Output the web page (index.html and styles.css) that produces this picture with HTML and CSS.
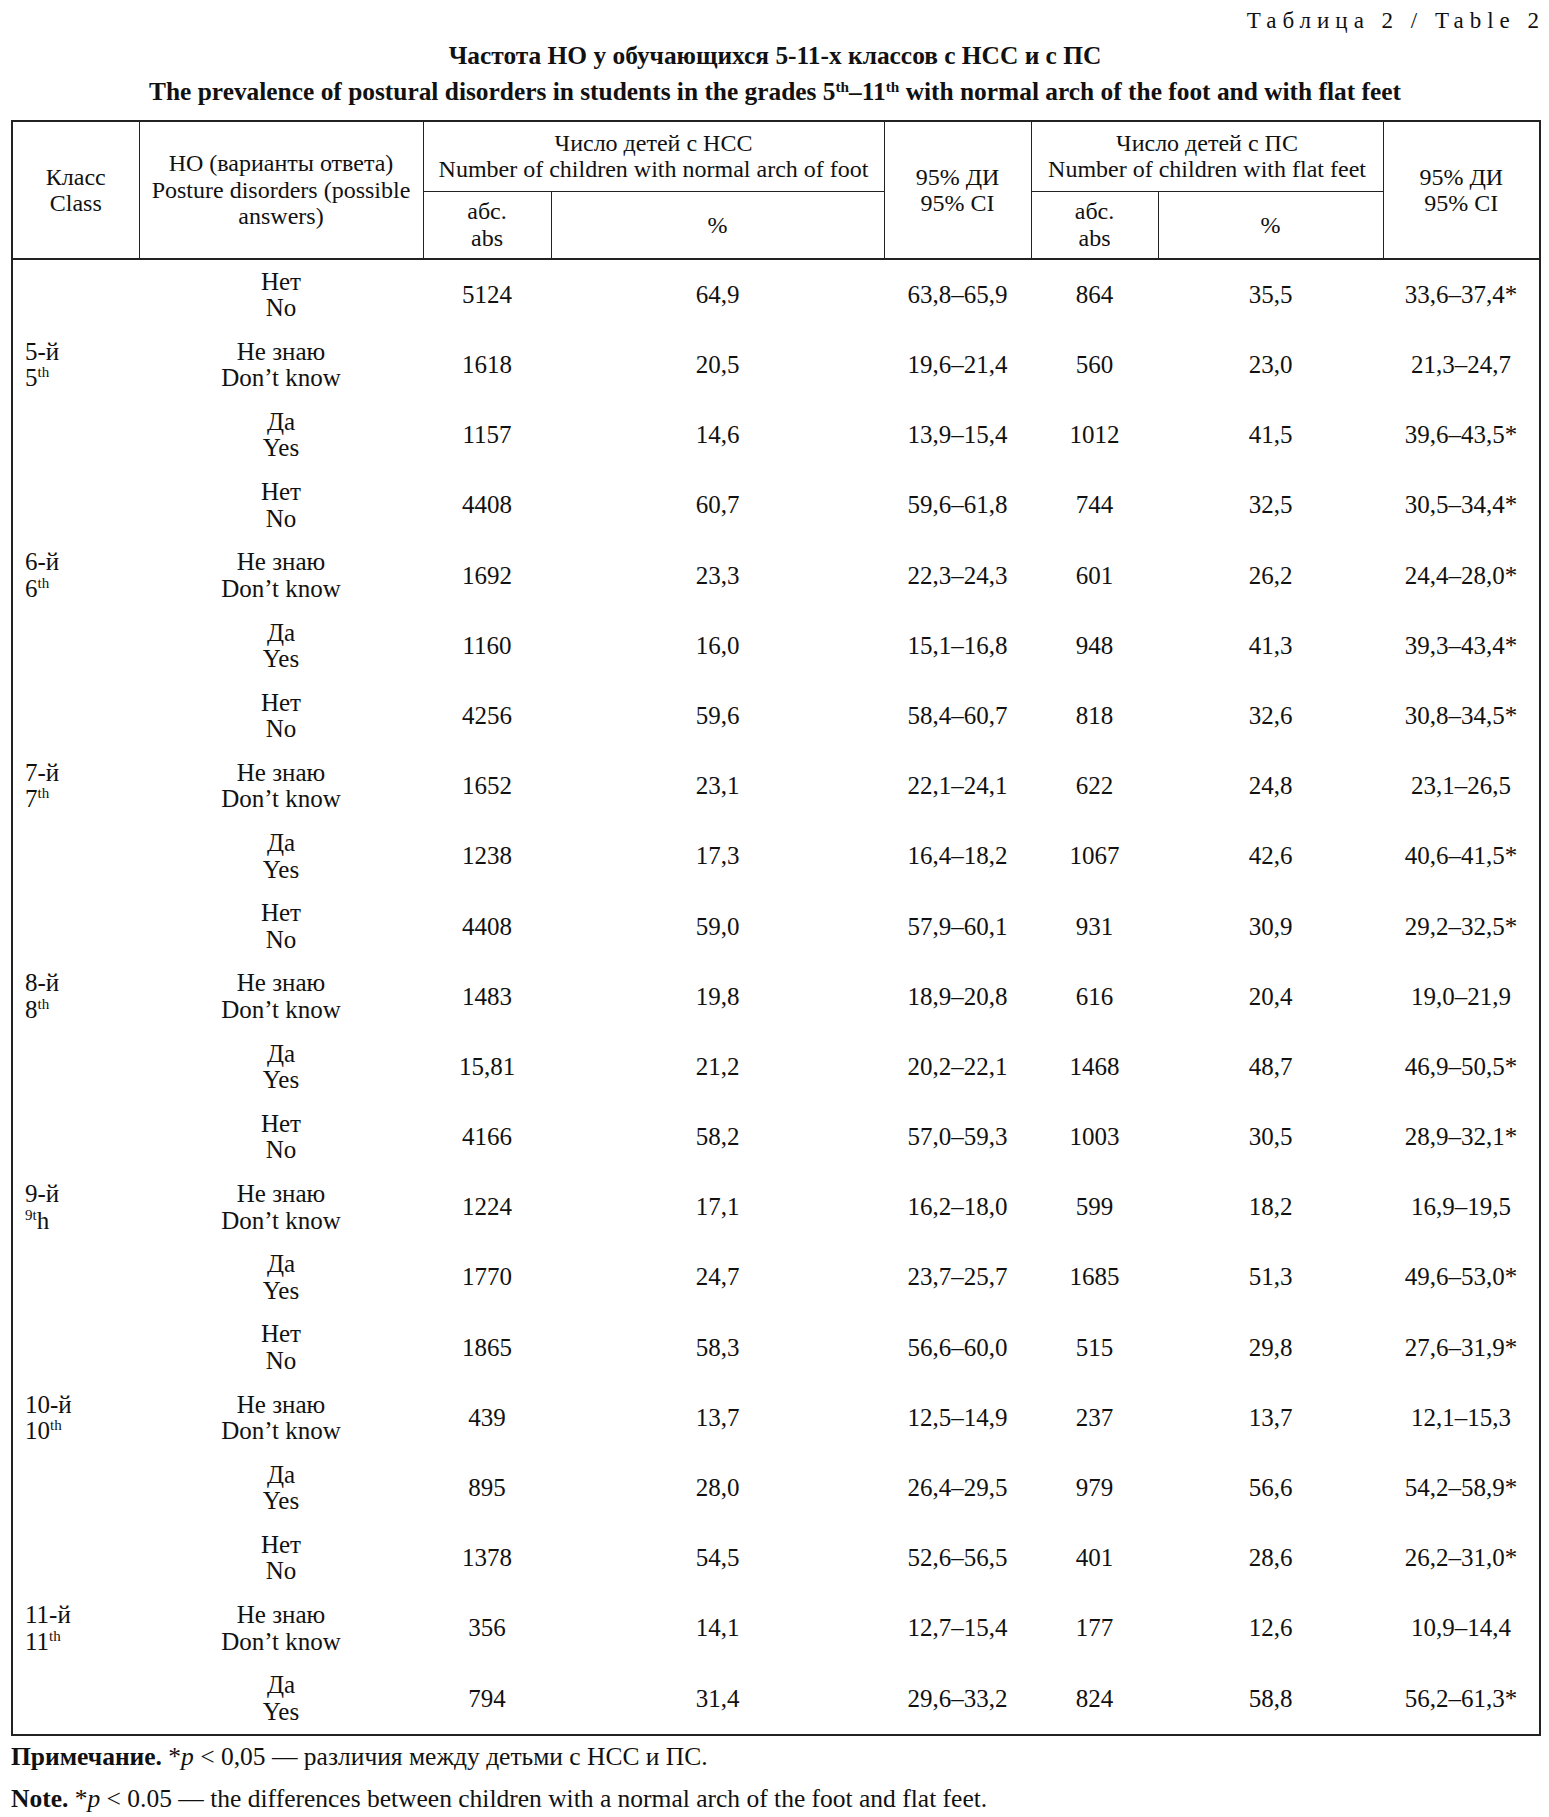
FILE: index.html
```html
<!DOCTYPE html>
<html lang="ru">
<head>
<meta charset="utf-8">
<title>Таблица 2</title>
<link rel="stylesheet" href="styles.css">
</head>
<body>
<div class="page">
  <p class="table-num">Таблица 2 / Table 2</p>
  <h1 class="caption">
    <span class="caption-line">Частота НО у обучающихся 5-11-х классов с НСС и с ПС</span>
    <span class="caption-line">The prevalence of postural disorders in students in the grades 5<sup>th</sup>–11<sup>th</sup> with normal arch of the foot and with flat feet</span>
  </h1>
  <table class="data">
    <colgroup>
      <col class="c1"><col class="c2"><col class="c3"><col class="c4"><col class="c5"><col class="c6"><col class="c7"><col class="c8">
    </colgroup>
    <thead>
      <tr class="h1row">
        <th rowspan="2">Класс<br>Class</th>
        <th rowspan="2">НО (варианты ответа)<br>Posture disorders (possible<br>answers)</th>
        <th colspan="2">Число детей с НСС<br>Number of children with normal arch of foot</th>
        <th rowspan="2">95% ДИ<br>95% CI</th>
        <th colspan="2">Число детей с ПС<br>Number of children with flat feet</th>
        <th rowspan="2">95% ДИ<br>95% CI</th>
      </tr>
      <tr class="h2row">
        <th>абс.<br>abs</th>
        <th>%</th>
        <th>абс.<br>abs</th>
        <th>%</th>
      </tr>
    </thead>
    <tbody>
      <tr><td class="cls" rowspan="3">5-й<br>5<sup>th</sup></td><td>Нет<br>No</td><td>5124</td><td>64,9</td><td>63,8–65,9</td><td>864</td><td>35,5</td><td>33,6–37,4*</td></tr>
      <tr><td>Не знаю<br>Don’t know</td><td>1618</td><td>20,5</td><td>19,6–21,4</td><td>560</td><td>23,0</td><td>21,3–24,7</td></tr>
      <tr><td>Да<br>Yes</td><td>1157</td><td>14,6</td><td>13,9–15,4</td><td>1012</td><td>41,5</td><td>39,6–43,5*</td></tr>

      <tr><td class="cls" rowspan="3">6-й<br>6<sup>th</sup></td><td>Нет<br>No</td><td>4408</td><td>60,7</td><td>59,6–61,8</td><td>744</td><td>32,5</td><td>30,5–34,4*</td></tr>
      <tr><td>Не знаю<br>Don’t know</td><td>1692</td><td>23,3</td><td>22,3–24,3</td><td>601</td><td>26,2</td><td>24,4–28,0*</td></tr>
      <tr><td>Да<br>Yes</td><td>1160</td><td>16,0</td><td>15,1–16,8</td><td>948</td><td>41,3</td><td>39,3–43,4*</td></tr>

      <tr><td class="cls" rowspan="3">7-й<br>7<sup>th</sup></td><td>Нет<br>No</td><td>4256</td><td>59,6</td><td>58,4–60,7</td><td>818</td><td>32,6</td><td>30,8–34,5*</td></tr>
      <tr><td>Не знаю<br>Don’t know</td><td>1652</td><td>23,1</td><td>22,1–24,1</td><td>622</td><td>24,8</td><td>23,1–26,5</td></tr>
      <tr><td>Да<br>Yes</td><td>1238</td><td>17,3</td><td>16,4–18,2</td><td>1067</td><td>42,6</td><td>40,6–41,5*</td></tr>

      <tr><td class="cls" rowspan="3">8-й<br>8<sup>th</sup></td><td>Нет<br>No</td><td>4408</td><td>59,0</td><td>57,9–60,1</td><td>931</td><td>30,9</td><td>29,2–32,5*</td></tr>
      <tr><td>Не знаю<br>Don’t know</td><td>1483</td><td>19,8</td><td>18,9–20,8</td><td>616</td><td>20,4</td><td>19,0–21,9</td></tr>
      <tr><td>Да<br>Yes</td><td>15,81</td><td>21,2</td><td>20,2–22,1</td><td>1468</td><td>48,7</td><td>46,9–50,5*</td></tr>

      <tr><td class="cls" rowspan="3">9-й<br><sup>9t</sup>h</td><td>Нет<br>No</td><td>4166</td><td>58,2</td><td>57,0–59,3</td><td>1003</td><td>30,5</td><td>28,9–32,1*</td></tr>
      <tr><td>Не знаю<br>Don’t know</td><td>1224</td><td>17,1</td><td>16,2–18,0</td><td>599</td><td>18,2</td><td>16,9–19,5</td></tr>
      <tr><td>Да<br>Yes</td><td>1770</td><td>24,7</td><td>23,7–25,7</td><td>1685</td><td>51,3</td><td>49,6–53,0*</td></tr>

      <tr><td class="cls" rowspan="3">10-й<br>10<sup>th</sup></td><td>Нет<br>No</td><td>1865</td><td>58,3</td><td>56,6–60,0</td><td>515</td><td>29,8</td><td>27,6–31,9*</td></tr>
      <tr><td>Не знаю<br>Don’t know</td><td>439</td><td>13,7</td><td>12,5–14,9</td><td>237</td><td>13,7</td><td>12,1–15,3</td></tr>
      <tr><td>Да<br>Yes</td><td>895</td><td>28,0</td><td>26,4–29,5</td><td>979</td><td>56,6</td><td>54,2–58,9*</td></tr>

      <tr><td class="cls" rowspan="3">11-й<br>11<sup>th</sup></td><td>Нет<br>No</td><td>1378</td><td>54,5</td><td>52,6–56,5</td><td>401</td><td>28,6</td><td>26,2–31,0*</td></tr>
      <tr><td>Не знаю<br>Don’t know</td><td>356</td><td>14,1</td><td>12,7–15,4</td><td>177</td><td>12,6</td><td>10,9–14,4</td></tr>
      <tr><td>Да<br>Yes</td><td>794</td><td>31,4</td><td>29,6–33,2</td><td>824</td><td>58,8</td><td>56,2–61,3*</td></tr>
    </tbody>
  </table>
  <p class="note"><b>Примечание.</b> *<i>p</i> &lt; 0,05 — различия между детьми с НСС и ПС.</p>
  <p class="note"><b>Note.</b> *<i>p</i> &lt; 0.05 — the differences between children with a normal arch of the foot and flat feet.</p>
</div>
</body>
</html>
```

FILE: styles.css
```css
html, body {
  margin: 0;
  padding: 0;
  background: #fff;
}

.page {
  padding: 0 10px 0 11px;
  font-family: "Liberation Serif", "Times New Roman", serif;
  color: #111;
}

.table-num {
  margin: 0;
  padding-top: 8px;
  text-align: right;
  font-size: 23px;
  line-height: 26px;
  letter-spacing: 6px;
  margin-right: -6px;
}

.caption {
  margin: 3px 0 11px;
  font-size: 25.4px;
  font-weight: bold;
  line-height: 36px;
  text-align: center;
}

.caption-line {
  display: block;
}

.caption sup {
  font-size: 0.6em;
  line-height: 0;
  vertical-align: 0.55em;
}

.data {
  width: 1528px;
  border-collapse: collapse;
  table-layout: fixed;
  border: 2px solid #222;
  font-size: 25px;
  line-height: 26.5px;
}

.c1 { width: 127px; }
.c2 { width: 284px; }
.c3 { width: 128px; }
.c4 { width: 333px; }
.c5 { width: 147px; }
.c6 { width: 127px; }
.c7 { width: 225px; }
.c8 { width: 157px; }

.data th {
  font-weight: normal;
  font-size: 24px;
  border: 1px solid #222;
  padding: 0 4px;
  text-align: center;
  vertical-align: middle;
}

.data thead tr:last-child th,
.data thead th[rowspan] {
  border-bottom: 2px solid #222;
}

.h1row { height: 70px; }
.h2row { height: 68px; }

.data td {
  padding: 0 4px;
  text-align: center;
  vertical-align: middle;
  height: 70.2px;
}

.data td.cls {
  text-align: left;
  padding-left: 12px;
}

.data sup {
  font-size: 0.6em;
  line-height: 0;
  vertical-align: 0.6em;
}

.note {
  margin: 0;
  font-size: 25.5px;
  line-height: 42px;
}

.note:first-of-type {
  margin-top: 1px;
}
```
